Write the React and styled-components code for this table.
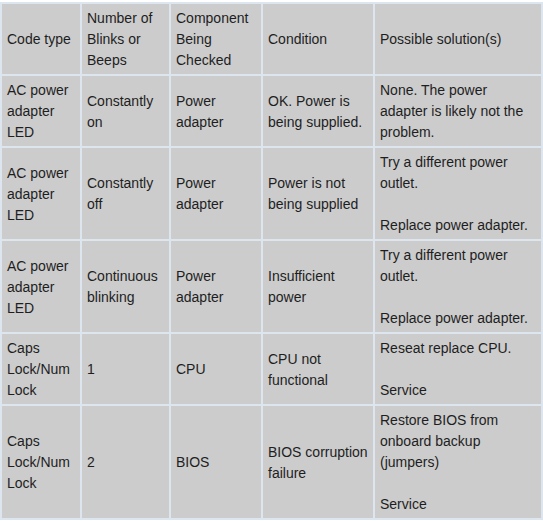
import styled, { createGlobalStyle } from "styled-components";

const rows = [
    {
        code: "AC power adapter LED",
        blinks: "Constantly on",
        component: "Power adapter",
        condition: "OK. Power is being supplied.",
        solutions: ["None. The power adapter is likely not the problem."],
    },
    {
        code: "AC power adapter LED",
        blinks: "Constantly off",
        component: "Power adapter",
        condition: "Power is not being supplied",
        solutions: ["Try a different power outlet.", "Replace power adapter."],
    },
    {
        code: "AC power adapter LED",
        blinks: "Continuous blinking",
        component: "Power adapter",
        condition: "Insufficient power",
        solutions: ["Try a different power outlet.", "Replace power adapter."],
    },
    {
        code: "Caps Lock/Num Lock",
        blinks: "1",
        component: "CPU",
        condition: "CPU not functional",
        solutions: ["Reseat replace CPU.", "Service"],
    },
    {
        code: "Caps Lock/Num Lock",
        blinks: "2",
        component: "BIOS",
        condition: "BIOS corruption failure",
        solutions: ["Restore BIOS from onboard backup (jumpers)", "Service"],
    },
];

const headers = [
    "Code type",
    "Number of Blinks or Beeps",
    "Component Being Checked",
    "Condition",
    "Possible solution(s)",
];

const widths = [78, 87, 90, 110, 166];

export default function App() {
    return (
        <>
            <GlobalStyle />
            <Table>
                <colgroup>
                    {widths.map((w, i) => (
                        <col key={i} style={{ width: w }} />
                    ))}
                </colgroup>
                <tbody>
                    <tr>
                        {headers.map((h) => (
                            <Cell key={h}>{h}</Cell>
                        ))}
                    </tr>
                    {rows.map((row, index) => (
                        <tr key={index}>
                            <Cell>{row.code}</Cell>
                            <Cell>{row.blinks}</Cell>
                            <Cell>{row.component}</Cell>
                            <Cell>{row.condition}</Cell>
                            <Cell>
                                {row.solutions.map((s, i) => (
                                    <Para key={i}>{s}</Para>
                                ))}
                            </Cell>
                        </tr>
                    ))}
                </tbody>
            </Table>
        </>
    );
}

const GlobalStyle = createGlobalStyle`
    body {
        margin: 0;
        background: #ffffff;
        font-family: "Liberation Sans", Arial, sans-serif;
    }
`;

const Table = styled.table`
    width: 543px;
    margin-top: 2px;
    table-layout: fixed;
    border-collapse: separate;
    border-spacing: 2px;
    background-color: #dde6ee;
    font-size: 14px;
    line-height: 21px;
    color: #1e1e1e;
`;

const Cell = styled.td`
    box-sizing: border-box;
    background-color: #cccccc;
    padding: 4px 5px 3px;
    vertical-align: middle;
    text-align: left;
`;

const Para = styled.p`
    margin: 0 0 21px;

    &:last-child {
        margin-bottom: 0;
    }
`;
